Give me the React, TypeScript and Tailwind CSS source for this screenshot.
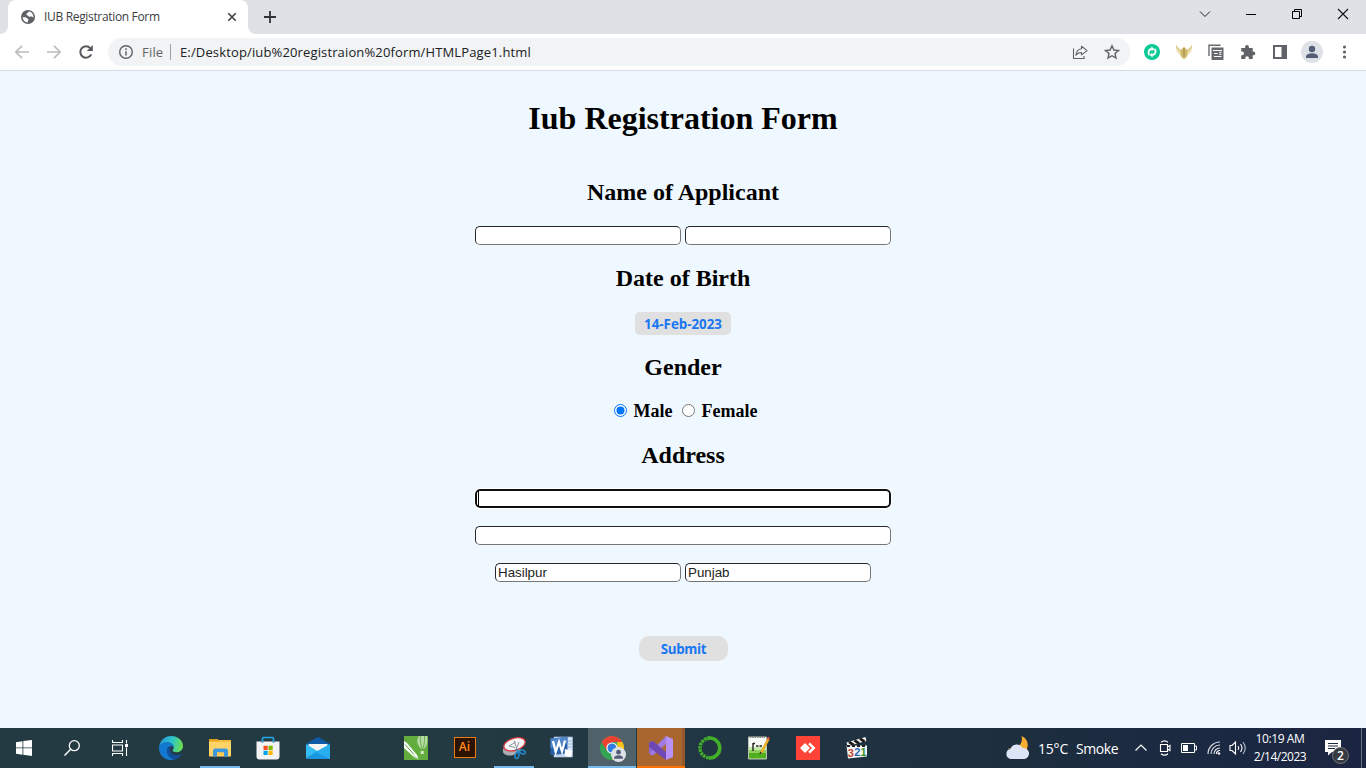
import type { ReactNode } from 'react';

const UI = "font-['Open_Sans','Noto_Sans',sans-serif]";

function Svg({ children, className = 'h-6 w-6', box = '0 0 24 24' }: { children: ReactNode; className?: string; box?: string }) {
  return (
    <svg viewBox={box} className={`block shrink-0 ${className}`} fill="none">
      {children}
    </svg>
  );
}

function Tabs() {
  return (
    <div className="flex h-[34px] bg-[#dee1e6]">
      <div className="flex w-2 items-end bg-white">
        <div className="h-[34px] w-2 rounded-br-lg bg-[#dee1e6]" />
      </div>
      <div className="flex h-[34px] w-60 items-center rounded-t-lg bg-white pl-[13px] pr-2.5">
        <Svg className="h-[14px] w-[14px]" box="0 0 14 14">
          <circle cx="7" cy="7" r="7" fill="#5f6368" />
          <path d="M8.300 1.600C6.700 2 6.900 3.200 5.700 3.700c-.8.400-.3 1.400.5 1.500 1.200.1 1 1.300 2 1.500.8.200 1.500-.4 2.500-.1.900.3 1.200 1 1.800 1C12.500 4.500 10.800 2.100 8.300 1.600z" fill="#fff" />
          <path d="M1.600 7.300h2.900c1.200 0 1.100 1.100 2 1.400 1 .3 1.300 1 .6 1.800-.5.600-.5 1.200-.3 2C3.900 12.300 1.700 10.200 1.600 7.300z" fill="#fff" />
        </Svg>
        <span className={`${UI} ml-[9px] flex-1 whitespace-nowrap text-[12px] leading-4 tracking-[-0.33px] text-[#3c4043]`}>IUB Registration Form</span>
        <Svg className="h-3 w-3" box="0 0 12 12">
          <path d="M2.300 2.300l7.400 7.400M9.700 2.300L2.300 9.700" stroke="#3c4043" strokeWidth="1.600" />
        </Svg>
      </div>
      <div className="flex w-2 items-end bg-white">
        <div className="h-[34px] w-2 rounded-bl-lg bg-[#dee1e6]" />
      </div>
      <Svg className="ml-2 mt-[11px] h-3 w-3" box="0 0 12 12">
        <path d="M6 0v12M0 6h12" stroke="#303236" strokeWidth="1.800" />
      </Svg>
      <div className="flex flex-1 justify-end gap-[34px] pr-[17px] pt-[8px]">
        <Svg className="h-3 w-3" box="0 0 12 12">
          <path d="M1 3.500l5 5 5-5" stroke="#222" />
        </Svg>
        <Svg className="h-3 w-3" box="0 0 12 12">
          <path d="M1 6.500h10" stroke="#000" />
        </Svg>
        <Svg className="h-3 w-3" box="0 0 12 12">
          <path d="M1.500 3.500h7v7h-7zM3.500 3.500v-2h7v7h-2" stroke="#000" />
        </Svg>
        <Svg className="h-3 w-3" box="0 0 12 12">
          <path d="M1 1l10 10M11 1L1 11" stroke="#111" strokeWidth="1.100" />
        </Svg>
      </div>
    </div>
  );
}

function Toolbar() {
  return (
    <div className="flex h-[37px] items-center border-b border-[#dadce0] bg-white">
      <Svg className="ml-[14px] h-4 w-4" box="0 0 16 16">
        <path d="M15 8H2M8 1.800L1.800 8 8 14.200" stroke="#babcbe" strokeWidth="1.700" />
      </Svg>
      <Svg className="ml-4 h-4 w-4" box="0 0 16 16">
        <path d="M1 8h13M8 1.800L14.200 8 8 14.200" stroke="#babcbe" strokeWidth="1.700" />
      </Svg>
      <Svg className="ml-4 h-4 w-4" box="0 0 16 16">
        <path d="M13.200 10.300A5.700 5.700 0 1 1 12.200 4.100" stroke="#55585d" strokeWidth="2" />
        <path d="M14.800 1v6H8.800z" fill="#55585d" />
      </Svg>
      <div className="ml-[14px] flex h-7 w-[1022px] items-center rounded-full bg-[#f1f3f4] pl-[11px]">
        <Svg className="h-[14px] w-[14px]" box="0 0 14 14">
          <circle cx="7" cy="7" r="6.300" stroke="#5f6368" strokeWidth="1.400" />
          <path d="M7 6.200v4.300M7 3.300v1.600" stroke="#5f6368" strokeWidth="1.500" />
        </Svg>
        <span className={`${UI} ml-[9px] w-[28px] whitespace-nowrap text-[13px] leading-5 tracking-[0.2px] text-[#5f6368]`}>File</span>
        <div className="h-4 w-px bg-[#9aa0a6]" />
        <span className={`${UI} ml-[9px] flex-1 whitespace-nowrap text-[13px] leading-5 tracking-[0.14px] text-[#202124]`}>E:/Desktop/iub%20registraion%20form/HTMLPage1.html</span>
        <Svg className="mr-4 h-4 w-4" box="0 0 16 16">
          <path d="M1.500 4.500v10h10.500v-2.500" stroke="#5f6368" strokeWidth="1.100" />
          <path d="M9.500 2.300l5.600 4.300-5.600 4.300V8.500c-2.700 0-4.400.8-5.600 2.800.4-3.500 2.400-6.100 5.600-6.500z" stroke="#5f6368" strokeWidth="1.100" strokeLinejoin="round" />
        </Svg>
        <Svg className="mr-[10px] h-4 w-4" box="0 0 16 16">
          <path d="M8 1.800l1.900 4.200 4.600.5-3.500 3 1 4.600-4-2.400-4 2.400 1-4.600-3.500-3L6.100 6z" stroke="#5f6368" strokeWidth="1.400" />
        </Svg>
      </div>
      <Svg className="ml-3.5 h-4 w-4" box="0 0 16 16">
        <circle cx="8" cy="8" r="8" fill="#08ca94" />
        <path d="M5.400 11.200C3.500 8.800 4.500 5.300 7.800 4.700M10.600 4.800c1.900 2.400.9 5.900-2.400 6.500" stroke="#fff" strokeWidth="1.900" />
        <path d="M7.300 2.400l3 2.300-2.600 2.800zM8.700 13.600l-3-2.300 2.600-2.800z" fill="#fff" />
      </Svg>
      <Svg className="ml-4 h-4 w-4" box="0 0 16 16">
        <path d="M0 .5c1 2 2.500 3 3.500 4.500L5 5.500 6.500 4 8 2.500 9.500 4 11 5.500l1.500-.5c1-1.500 2.500-2.500 3.500-4.500 0 5-1 8-3.500 9.500L11 13l-3 2.500L5 13l-1.500-3C1 8.500 0 5.500 0 .5z" fill="#dccb8a" />
        <path d="M1 5l3 3M1.800 8L5 10M15 5l-3 3M14.200 8L11 10" stroke="#f6edc6" strokeWidth=".9" />
        <path d="M5 5.500l1.500 1V12L5 10.500zM11 5.500l-1.500 1V12l1.500-1.500z" fill="#cbb05c" />
        <path d="M8 4v9.500" stroke="#9c7f35" strokeWidth="1.200" />
      </Svg>
      <Svg className="ml-4 h-4 w-4" box="0 0 16 16">
        <path d="M1 12V1.200h11.500" stroke="#66696d" strokeWidth="1.400" />
        <path d="M3.500 3.500h12V16h-12z" fill="#66696d" />
        <path d="M5 6.500h9M6 9.500h3.500M11 8.300h2.500M11 10.300h2.500M6 12.500h7.500" stroke="#fff" strokeWidth="1" />
      </Svg>
      <Svg className="ml-4 h-4 w-4" box="0 0 16 16">
        <path d="M1.200 4h3.900V3a1.900 1.900 0 0 1 3.800 0v1H12.700v3.600h.8a1.800 1.800 0 0 1 0 3.600h-.8V15H8.900v-1a1.800 1.800 0 0 0-3.600 0v1H1.200v-3.800h1a1.800 1.800 0 0 0 0-3.600h-1z" fill="#5f6368" />
      </Svg>
      <Svg className="ml-4 h-4 w-4" box="0 0 16 16">
        <path d="M1 1h14v14H1zM3 3v10h6.500V3z" fill="#5f6368" fillRule="evenodd" />
      </Svg>
      <Svg className="ml-[13px] h-[22px] w-[22px]" box="0 0 22 22">
        <circle cx="11" cy="11" r="11" fill="#dee1e6" />
        <circle cx="11" cy="8" r="3.200" fill="#525d76" />
        <path d="M5 17v-1.600c0-2 3.800-3.200 6-3.200s6 1.200 6 3.200V17z" fill="#525d76" />
      </Svg>
      <Svg className="ml-[13px] h-4 w-4" box="0 0 16 16">
        <circle cx="8.500" cy="3" r="1.600" fill="#5f6368" />
        <circle cx="8.500" cy="8" r="1.600" fill="#5f6368" />
        <circle cx="8.500" cy="13" r="1.600" fill="#5f6368" />
      </Svg>
    </div>
  );
}

function Field({ className, value }: { className: string; value?: string }) {
  return (
    <div
      role="textbox"
      className={`${className} h-[19px] rounded-[5px] border border-b-[#767676] border-l-[#26262b] border-r-[#767676] border-t-[#26262b] bg-white pl-0.5 font-['Liberation_Sans',Arial,sans-serif] text-[13.333px] leading-[17px] text-[#222]`}
    >
      {value}
    </div>
  );
}

function Heading({ children, className = '' }: { children: ReactNode; className?: string }) {
  return <h2 className={`h-[27px] whitespace-nowrap text-[24px] font-bold leading-[27px] ${className}`}>{children}</h2>;
}

function RegistrationForm() {
  return (
    <main className="flex h-[657px] flex-col items-center bg-[#f0f8ff] font-['Liberation_Serif','Times_New_Roman',serif] text-black">
      <h1 className="mt-[29px] h-[37px] whitespace-nowrap text-[32px] font-bold leading-[37px]">Iub Registration Form</h1>
      <Heading className="mt-[42px]">Name of Applicant</Heading>
      <div className="mt-5 flex gap-1">
        <Field className="w-[206px]" />
        <Field className="w-[206px]" />
      </div>
      <Heading className="mt-5">Date of Birth</Heading>
      <button className={`${UI} mt-5 h-[23px] w-24 whitespace-nowrap rounded-[5px] bg-[#e0e0e0] pt-0.5 text-[13.333px] font-bold leading-[21px] text-[#1877f2]`}>14-Feb-2023</button>
      <Heading className="mt-[19px]">Gender</Heading>
      <div className="mt-5 flex h-5 items-center pl-[5px] text-[18px] font-bold leading-5">
        <Svg className="mb-0.5 h-[13px] w-[13px]" box="0 0 13 13">
          <circle cx="6.500" cy="6.500" r="6" fill="#fff" stroke="#0075ff" />
          <circle cx="6.500" cy="6.500" r="4" fill="#0075ff" />
        </Svg>
        <span className="ml-[7px] w-[48px] whitespace-nowrap">Male</span>
        <Svg className="mb-0.5 h-[13px] w-[13px]" box="0 0 13 13">
          <circle cx="6.500" cy="6.500" r="6" fill="#fff" stroke="#767676" />
        </Svg>
        <span className="ml-[7px] whitespace-nowrap">Female</span>
      </div>
      <Heading className="mt-[21px]">Address</Heading>
      <div role="textbox" className="mt-5 flex h-[19px] w-[416px] rounded-[5px] border-2 border-[#101010] bg-white pl-px outline outline-1 outline-white">
        <span className="h-[15px] w-px bg-black" />
      </div>
      <Field className="mt-[18px] w-[416px]" />
      <div className="mt-[18px] flex gap-1">
        <Field className="w-[186px]" value="Hasilpur" />
        <Field className="w-[186px]" value="Punjab" />
      </div>
      <button className={`${UI} ml-px mt-[54px] h-[25px] w-[89px] rounded-[10px] bg-[#e0e0e0] pt-0.5 text-[13.333px] font-bold leading-[23px] tracking-[-0.3px] text-[#1877f2]`}>Submit</button>
    </main>
  );
}

function Cell({ children, className = 'w-[49px]', bar = '' }: { children?: ReactNode; className?: string; bar?: string }) {
  return (
    <div className={`flex h-10 shrink-0 flex-col items-center ${className}`}>
      <div className="flex h-[38px] items-center justify-center pt-0.5">{children}</div>
      <div className={`h-0.5 ${bar}`} />
    </div>
  );
}

function Taskbar() {
  return (
    <footer className="flex h-10 bg-[linear-gradient(90deg,#243a42_0%,#233a42_35%,#203542_55%,#1d2e3f_75%,#1b2842_90%,#1b2541_100%)]">
      <Cell className="w-12">
        <Svg className="h-4 w-4" box="0 0 16 16">
          <path d="M0 2.200l6.500-.9v6.200H0zM7.300 1.100L16 0v7.500H7.300zM0 8.300h6.500v6.400L0 13.800zM7.300 8.300H16V16l-8.700-1.200z" fill="#fff" />
        </Svg>
      </Cell>
      <Cell className="w-12">
        <Svg className="h-4 w-4" box="0 0 16 16">
          <circle cx="10.300" cy="5.700" r="5" stroke="#fff" strokeWidth="1.300" />
          <path d="M6.700 9.300L.5 15.500" stroke="#fff" strokeWidth="1.400" />
        </Svg>
      </Cell>
      <Cell className="w-[50px]">
        <Svg className="h-4 w-4 -translate-x-px" box="0 0 16 16">
          <path d="M.5 0v2.500h10V0M.5 16v-2.500h10V16M.5 5h10v6H.5zM14.500 0v3.500M14.500 7.500V16" stroke="#fff" strokeWidth="1.100" />
          <path d="M13 4h3v3h-3z" fill="#fff" />
        </Svg>
      </Cell>
      <Cell>
        <Svg>
          <defs>
            <linearGradient id="edgeTop" x1="2" y1="5" x2="23" y2="10" gradientUnits="userSpaceOnUse">
              <stop stopColor="#259fd9" />
              <stop offset=".5" stopColor="#2cc5c9" />
              <stop offset="1" stopColor="#6bdf52" />
            </linearGradient>
          </defs>
          <path d="M.2 10.800C1 4.500 6 0 12 0c7 0 12 4.700 12 10 0 4-3.200 6.300-6.600 6.300-2.800 0-4-1-4-1.700 0-.6 1.300-1.100 1.300-3.100 0-2.800-2.500-5-6.200-5C4.500 6.500 1.500 8.200.2 10.800z" fill="url(#edgeTop)" />
          <path d="M0 12c0-3.300 3-5.800 7.500-5.800 4.800 0 7.300 2.600 7.200 5.400-1.500-2-5.600-1.800-6.500 1.600-.8 3.700 2.300 9.200 7.500 10.300C7.800 26 0 20.300 0 12z" fill="#1379d0" />
          <path d="M8.300 12.500C6.700 16.500 10 22.500 15 23.700c3-.3 5.900-2.700 7.300-5 .3-.6-.1-.8-.6-.5-3.900 2-8.500 1-10.300-2.400-.8-1.600-.4-3 .4-4-1.600-.6-2.900-.2-3.500.7z" fill="#114f9c" />
        </Svg>
      </Cell>
      <Cell bar="w-10 bg-[#76b9ed]">
        <Svg>
          <path d="M1 3h9l1 2.500H1z" fill="#e0a017" />
          <path d="M1 5h22v15.500H1z" fill="#ffd367" />
          <path d="M1 5h8l2-1h12v2H1z" fill="#f5bd3a" />
          <path d="M5 20.500V14l1.500-1.500h12L20 14v6.500h-4v-4H9v4z" fill="#3b98dc" />
          <path d="M9 16.500h7V19H9z" fill="#fbc64b" />
        </Svg>
      </Cell>
      <Cell>
        <Svg className="h-6 w-6 -translate-x-px">
          <path d="M6.500 7V2.300q0-.8.8-.8h9.400q.8 0 .8.800V7" stroke="#23a8e8" strokeWidth="1.600" />
          <path d="M.5 5.500h23v15a3 3 0 0 1-3 3h-17a3 3 0 0 1-3-3z" fill="#f3f3f3" />
          <path d="M6.500 5.300v1.500M17.500 5.300v1.500" stroke="#1683c4" strokeWidth="1.500" />
          <path d="M7.500 9.800h4.200V14H7.500z" fill="#f25022" />
          <path d="M12.500 9.800h4.200V14h-4.200z" fill="#7fba00" />
          <path d="M7.500 14.800h4.200V19H7.500z" fill="#00a4ef" />
          <path d="M12.500 14.800h4.200V19h-4.200z" fill="#ffb900" />
        </Svg>
      </Cell>
      <Cell>
        <Svg>
          <path d="M0 8L12 .8 24 8v4H0z" fill="#0f5aa6" />
          <path d="M2.500 8h19v8h-19z" fill="#f4f4f4" />
          <path d="M0 8l12 7.500L0 22.500zM24 8l-12 7.500 12 7z" fill="#32bdf2" />
          <path d="M0 23l12-8.500L24 23z" fill="#1998e4" />
          <path d="M24 8v15L9.500 16z" fill="#28aeef" />
        </Svg>
      </Cell>
      <Cell />
      <Cell>
        <Svg>
          <path d="M0 0h24v24H0z" fill="#62ad3e" />
          <path d="M14 1.500c-2 4 .3 9 3.300 11.500h2.500C23 10 24 6 23 0h-8z" fill="#b7d9a5" />
          <path d="M16.500 0c-.5 5 .5 9 1.500 13M20.500 0c.3 5-.4 9-1.500 13" stroke="#6caf4c" strokeWidth="1" />
          <path d="M16.700 15h3v3h-3z" fill="#d5e9cb" />
          <path d="M0 5l3 2 10 12 1.500 4.500-4-2L0 12z" fill="#fff" />
          <path d="M1 8.500l9 10" stroke="#4e9a30" strokeWidth="1" />
          <path d="M14 23.500l-4-4" stroke="#62ad3e" strokeWidth=".8" />
        </Svg>
      </Cell>
      <Cell>
        <div className="-mt-0.5 flex h-[21px] w-[22px] items-center justify-center border-[1.5px] border-[#ee7b12] bg-[#2b1202] pb-px font-['Open_Sans',sans-serif] text-[12px] font-semibold leading-none text-[#ff8a16]">Ai</div>
      </Cell>
      <Cell bar="w-10 bg-[#76b9ed]">
        <Svg>
          <ellipse cx="10" cy="13" rx="9.500" ry="6" transform="rotate(-20 10 13)" fill="#a9adb2" />
          <ellipse cx="12.500" cy="8.300" rx="11" ry="6" transform="rotate(-17 12.500 8.300)" fill="#f7f7f7" stroke="#dc3a40" strokeWidth="1.300" />
          <path d="M7 10l7-4M7 10l6 1.500M12 4.500l3 9M17 6l-3 8" stroke="#91979d" strokeWidth="1" />
          <ellipse cx="15" cy="19.500" rx="1.900" ry="3" stroke="#2488c8" strokeWidth="1.600" transform="rotate(15 15 19.500)" />
          <ellipse cx="20.500" cy="16" rx="3" ry="1.800" stroke="#2488c8" strokeWidth="1.600" transform="rotate(18 20.500 16)" />
          <path d="M14 13l3 4" stroke="#2488c8" strokeWidth="1.500" />
        </Svg>
      </Cell>
      <Cell>
        <Svg className="h-6 w-6 -translate-x-px">
          <path d="M4 1h18.500v20H4z" fill="#dce8f7" stroke="#9eb8d8" strokeWidth=".7" />
          <path d="M18 5h3.500M18 8h3.500M18 11h3.500M6 19h12" stroke="#93b4db" />
          <path d="M.5 2.500l17-1.500v16.500l-17 1.500z" fill="#2860ab" />
          <path d="M.5 2.500l17-1.500v6L.5 12z" fill="#4f87ca" />
          <path d="M3 5l2.700 11L9 6l3 9.500L15 4.500" stroke="#fff" strokeWidth="2.300" />
          <path d="M15 13l7.500 2-2 6-6-1.500z" fill="#fff" />
        </Svg>
      </Cell>
      <Cell className="ml-px w-12 bg-[#4f626a]" bar="w-12 bg-[#76b9ed]">
        <Svg className="h-[27px] w-[27px] translate-x-px translate-y-px" box="0 0 27 27">
          <circle cx="12" cy="12" r="12" fill="#34a353" />
          <path d="M1.600 6A12 12 0 0 1 22.400 6H12L7 15z" fill="#e94335" />
          <path d="M22.400 6A12 12 0 0 1 12 24l5.200-9V6z" fill="#fbc116" />
          <circle cx="12" cy="12" r="5.600" fill="#fff" />
          <circle cx="12" cy="12" r="4.500" fill="#347de0" />
          <circle cx="18.500" cy="18.500" r="7.500" fill="#dee1e6" />
          <circle cx="18.500" cy="16.200" r="2.400" fill="#525d76" />
          <path d="M14 22.800v-1c0-1.700 2.800-2.600 4.500-2.600s4.500.9 4.500 2.600v1z" fill="#525d76" />
        </Svg>
      </Cell>
      <Cell className="ml-px w-12 bg-[#a9672f] shadow-[inset_-4px_0_0_-1px_#93592d]" bar="w-12 bg-[#ff7200]">
        <Svg>
          <path d="M0 6.500L4 5v14.500L0 17.500z" fill="#8b6ad0" />
          <path d="M4 19.500L0 17.500 17 0v8z" fill="#a07ae0" />
          <path d="M4 5l13 11v8L0 11V6.500z" fill="#7048b6" />
          <path d="M17 0l7 3v18l-7 3z" fill="#b990f4" />
        </Svg>
      </Cell>
      <Cell>
        <Svg>
          <path d="M9 2.400A10 10 0 1 1 11 22" stroke="#43b02a" strokeWidth="3.600" />
          <path d="M12 2A10 10 0 1 0 12 22" stroke="#43b02a" strokeWidth="3.400" strokeDasharray="2.600 .8" />
          <path d="M11 3.900A8 8 0 1 0 11 20" stroke="#308a2c" strokeWidth="1" strokeDasharray="1 2" />
        </Svg>
      </Cell>
      <Cell>
        <Svg>
          <path d="M1.500 1h18v22h-18z" fill="#f8faf5" stroke="#bcc5b5" />
          <path d="M2 17h17v5.500H2z" fill="#4fae1c" />
          <path d="M2 14h17v3H2z" fill="#8fd05c" />
          <path d="M2 11h17v3H2z" fill="#c6eaa7" />
          <path d="M3 1.500h15" stroke="#777" strokeDasharray="1.200 1.200" />
          <path d="M6 7v8M6 7.500h2M9 10h2.500M12.500 10H15" stroke="#222" strokeWidth="1.400" />
          <path d="M21.500 3L14 17" stroke="#edad29" strokeWidth="2.600" />
          <path d="M21 .5l2 1.200-1 2-2-1z" fill="#d64b43" />
          <path d="M13 15.500l2 1.200-2.500 2z" fill="#333" />
        </Svg>
      </Cell>
      <Cell>
        <Svg>
          <path d="M0 0h24v24H0z" fill="#ff4336" />
          <path d="M9 7l5 5-5 5-5-5zM12.200 8.200L14 6.500l5.500 5.500-5.500 5.500-1.800-1.700L16 12z" fill="#fff" />
        </Svg>
      </Cell>
      <Cell>
        <Svg>
          <path d="M1.500 6.500L20.500 1l.9 4L2.500 10z" fill="#f2f2f2" />
          <path d="M4 5.800l4.500 3M9.500 4.300l4.500 3M15 2.600l4.500 3" stroke="#191919" strokeWidth="2.800" />
          <path d="M1.500 9.500H22v11L3 22.500z" fill="#f5f5f5" />
          <path d="M2 10h20" stroke="#222" strokeWidth="2" strokeDasharray="3 2" />
          <text x="2.800" y="20.500" fontFamily="Liberation Sans" fontSize="11" fontWeight="700" fill="#bd4829">3</text>
          <text x="9.200" y="20.200" fontFamily="Liberation Sans" fontSize="11" fontWeight="700" fill="#2868b0">2</text>
          <text x="15.500" y="19.600" fontFamily="Liberation Sans" fontSize="11" fontWeight="700" fill="#34902d">1</text>
        </Svg>
      </Cell>
      <div className={`${UI} ml-auto flex items-center text-white`}>
        <Svg className="h-6 w-6" box="0 0 24 24">
          <path d="M15.500 0c5.500 2.500 8 8 5 14H10C6 13 3 12 2 13c6 1 16-3 13.500-13z" fill="#f7ad32" />
          <path d="M5 23a5 5 0 0 1-.5-9.900 6.500 6.500 0 0 1 12-1A5.500 5.500 0 0 1 18.500 23z" fill="#dce5f5" />
        </Svg>
        <span className="ml-2 w-[38px] whitespace-nowrap pt-0.5 text-[14px] leading-5 tracking-[-0.2px]">15°C</span>
        <span className="w-[58px] whitespace-nowrap pt-0.5 text-[14px] leading-5 tracking-[-0.4px]">Smoke</span>
        <Svg className="ml-[1px] h-3 w-3" box="0 0 12 12">
          <path d="M.5 8.500L6 3l5.500 5.500" stroke="#fff" strokeWidth="1.200" />
        </Svg>
        <Svg className="ml-3 h-4 w-3" box="0 0 12 16">
          <path d="M1.500 4.500h7v7h-7zM8.500 7l2.500-1.500v5L8.500 9M2 2.300Q5.500-.5 9 2.300M2 13.700Q5.500 16.500 9 13.700" stroke="#fff" strokeWidth="1.100" />
        </Svg>
        <Svg className="ml-[10px] h-[10px] w-4" box="0 0 16 10">
          <path d="M.5.500h13v9H.5zM14 3h1.500v4H14" stroke="#fff" />
          <path d="M2 2h5v6H2z" fill="#fff" />
        </Svg>
        <Svg className="ml-[10px] h-[14px] w-[14px]" box="0 0 14 14">
          <path d="M1 13A12 12 0 0 1 13 1M4 13a9 9 0 0 1 9-9M7 13a6 6 0 0 1 6-6" stroke="#d8dce2" strokeWidth="1.200" />
          <path d="M9.500 13a3.500 3.500 0 0 1 3.500-3.500" stroke="#fff" strokeWidth="1.200" />
          <circle cx="12" cy="12.500" r="1.200" fill="#fff" />
        </Svg>
        <Svg className="ml-2 h-4 w-[18px]" box="0 0 18 16">
          <path d="M1 5.500h2L6.500 2v12L3 10.500H1z" stroke="#fff" strokeWidth="1.100" />
          <path d="M9 6q1.500 2 0 4M11.500 4q3 4 0 8" stroke="#fff" strokeWidth="1.100" />
          <path d="M14 2q4.500 6 0 12" stroke="#b9c0ca" strokeWidth="1.100" />
        </Svg>
        <div className="ml-1 flex w-[58px] flex-col items-center whitespace-nowrap text-[12px] leading-[18px]">
          <span className="tracking-[-0.4px]">10:19 AM</span>
          <span className="tracking-[-0.5px]">2/14/2023</span>
        </div>
        <div className="relative ml-4 mt-2 h-6 w-6">
          <Svg className="h-4 w-4" box="0 0 16 16">
            <path d="M0 0h16v12H7l-4 3.500V12H0z" fill="#fff" />
            <path d="M3 3.500h10M3 6h10M3 8.500h7" stroke="#1b2841" />
          </Svg>
          <span className="absolute left-[7px] top-[7px] flex h-[17px] w-[17px] items-center justify-center rounded-full border border-[#777] bg-[#363b43] text-[12px] font-semibold leading-none">2</span>
        </div>
        <div className="ml-[12px] h-10 w-px bg-[#65707e]" />
        <div className="w-1" />
      </div>
    </footer>
  );
}

export default function App() {
  return (
    <div className="h-[768px] w-[1366px] overflow-hidden">
      <Tabs />
      <Toolbar />
      <RegistrationForm />
      <Taskbar />
    </div>
  );
}
